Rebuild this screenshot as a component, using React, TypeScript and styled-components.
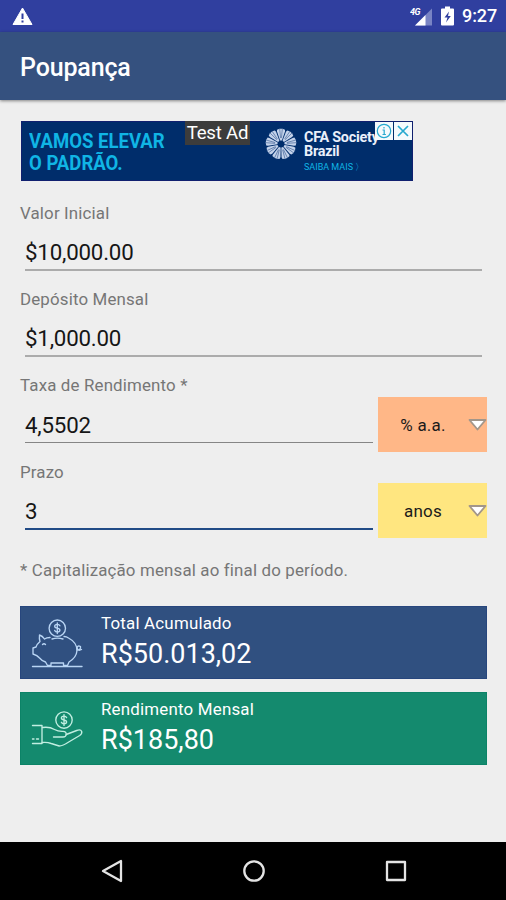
import React from "react";
import styled, { createGlobalStyle } from "styled-components";

const GlobalStyle = createGlobalStyle`
  *, *::before, *::after { box-sizing: border-box; }
  body { margin: 0; background: #eeeeee; font-family: Roboto, "Liberation Sans", sans-serif; }
`;

const Screen = styled.div`
  width: 506px;
  height: 900px;
  display: flex;
  flex-direction: column;
  background: #eeeeee;
  overflow: hidden;
`;

const StatusBar = styled.header`
  height: 32px;
  flex: none;
  display: flex;
  align-items: center;
  padding: 0 9px 0 12px;
  background: #303f9f;
  color: #fff;
`;

const StatusIcons = styled.div`
  margin-left: auto;
  display: flex;
  align-items: center;
  gap: 8px;
`;

const Clock = styled.span`
  width: 35px;
  font-size: 18px;
  font-weight: 500;
  line-height: 32px;
  letter-spacing: -0.1px;
  text-align: right;
`;

const AppBar = styled.div`
  height: 68px;
  flex: none;
  display: flex;
  align-items: center;
  padding: 2px 20px 0;
  background: #35517f;
  box-shadow: 0 1px 3px rgba(0, 0, 0, 0.45);
`;

const Title = styled.h1`
  margin: 0;
  color: #fff;
  font-size: 25px;
  font-weight: 500;
  line-height: 33px;
  letter-spacing: -0.15px;
`;

const Content = styled.main`
  flex: 1;
  display: flex;
  flex-direction: column;
  padding: 21px 19px 0 20px;
`;

const AdBanner = styled.div`
  position: relative;
  flex: none;
  width: 392px;
  height: 60px;
  margin: 0 0 22px 1px;
  display: flex;
  background: #002d6b;
  border: 1px solid #10206f;
  color: #10b5e5;
`;

const AdSlogan = styled.div`
  width: 243px;
  padding: 8px 0 0 7px;
  font-size: 20.5px;
  font-weight: 700;
  line-height: 22px;
  white-space: nowrap;
`;

const SloganLine = styled.span`
  display: block;
  transform: scaleX(0.905);
  transform-origin: left;
`;

const AdBrand = styled.div`
  padding: 9px 0 0 7px;
  white-space: nowrap;
`;

const BrandName = styled.div`
  color: #eaf0fa;
  font-size: 14.4px;
  font-weight: 700;
  line-height: 14px;
  letter-spacing: -0.25px;
`;

const BrandLink = styled.div`
  margin-top: 3px;
  font-size: 9px;
  line-height: 11px;
`;

const BrandMark = styled.svg`
  display: block;
  flex: none;
  margin-top: 6px;
`;

const TestTag = styled.span`
  position: absolute;
  left: 163px;
  top: -1px;
  width: 65px;
  height: 24px;
  background: #3c3c3c;
  color: #fff;
  font-size: 18.6px;
  line-height: 25px;
  letter-spacing: -0.2px;
  text-align: center;
  white-space: nowrap;
`;

const AdControls = styled.div`
  position: absolute;
  top: 0;
  right: 0;
  display: flex;
  gap: 1px;
`;

const AdControl = styled.span`
  width: 18px;
  height: 18px;
  background: #f4fafc;
  display: flex;
  align-items: center;
  justify-content: center;
`;

const Field = styled.div`
  height: 86px;
  flex: none;
`;

const Label = styled.div<{ $low?: boolean }>`
  height: 22px;
  color: #767676;
  font-size: 16.9px;
  line-height: ${(p) => (p.$low ? 22 : 21)}px;
  letter-spacing: 0.15px;
`;

const FieldRow = styled.div`
  height: 55px;
  display: flex;
  gap: 5px;
`;

const underlines = {
  wide: "2px solid #ababab",
  thin: "1px solid #858585",
  active: "2px solid #214b86",
};

const Value = styled.div<{ $line: keyof typeof underlines }>`
  flex: 1;
  height: ${(p) => (p.$line === "active" ? 47 : 46)}px;
  margin-left: 5px;
  margin-right: ${(p) => (p.$line === "wide" ? 5 : 0)}px;
  padding-top: ${(p) => (p.$line === "wide" ? 12 : 13)}px;
  color: #161616;
  font-size: 22.3px;
  line-height: 30px;
  letter-spacing: -0.2px;
  border-bottom: ${(p) => underlines[p.$line]};
`;

const Select = styled.div<{ $color: string }>`
  width: 109px;
  display: flex;
  align-items: center;
  background: ${(p) => p.$color};
  color: #1b1b1b;
  font-size: 17px;
`;

const SelectText = styled.span`
  flex: 1;
  text-align: center;
  letter-spacing: 0.2px;
`;

const Note = styled.p`
  height: 22px;
  flex: none;
  margin: 12px 0 25px;
  color: #767676;
  font-size: 16.9px;
  line-height: 22px;
  letter-spacing: 0.15px;
`;

const Card = styled.section<{ $color: string; $edge: string }>`
  height: 73px;
  flex: none;
  margin-bottom: 13px;
  display: flex;
  align-items: center;
  gap: 17px;
  padding-left: 9px;
  background: ${(p) => p.$color};
  border: 1px solid ${(p) => p.$edge};
  color: #fff;
`;

const CardText = styled.div`
  display: flex;
  flex-direction: column;
  height: 100%;
  padding-top: 5px;
`;

const CardLabel = styled.span`
  font-size: 16.9px;
  line-height: 22px;
  letter-spacing: 0.2px;
`;

const CardValue = styled.span`
  font-size: 27px;
  line-height: 40px;
`;

const NavBar = styled.nav`
  height: 58px;
  flex: none;
  display: flex;
  justify-content: center;
  align-items: center;
  gap: 118px;
  padding-left: 1px;
  background: #000;
`;

const CardIcon = styled.svg`
  display: block;
  flex: none;
`;

const Arrow = () => (
  <svg width="19" height="15" viewBox="0 0 19 15">
    <path d="M1.500 3h16L9.500 12.500z" fill="#fff" stroke="#a2968a" strokeWidth="1.800" strokeLinejoin="round" />
  </svg>
);

const petals = Array.from({ length: 9 }, (_, i) => i * 40);

const PetalMark = () => (
  <BrandMark width="32" height="32" viewBox="-16 -16 32 32">
    {petals.map((a) => (
      <g key={a} transform={`rotate(${a})`}>
        <path d="M-.9 -3.500L-4 -12.500V-14.300L-1.500 -15.300H1.500L4 -14.300V-12.500L.9 -3.500z" fill="#c3d2ea" />
        <path d="M-.4 -6L-1.400 -15.800M.4 -6L1.400 -15.800" stroke="#2d5189" strokeWidth=".55" />
      </g>
    ))}
  </BrandMark>
);

const Coin = ({ x, y }: { x: number; y: number }) => (
  <g>
    <circle cx={x} cy={y} r="8.2" />
    <path
      d={`M${x + 2.6} ${y - 2.4}q-.7-1.5-2.6-1.5q-2.6 0-2.6 1.9q0 1.5 2.6 2q2.6.5 2.6 2.1q0 1.8-2.6 1.8q-2 0-2.6-1.6M${x} ${y - 5.4}v10.8`}
    />
  </g>
);

const PiggyIcon = () => (
  <CardIcon width="54" height="54" viewBox="30 615 54 54" fill="none" stroke="#b9d5f4" strokeWidth="1.35" strokeLinejoin="round" strokeLinecap="round">
    <Coin x={57.3} y={627.2} />
    <path d="M50 636.500q-3.500 0-5.500 1.500q-2-3-5-4q-.5 4 .5 6.500q-3.500 3-4 5.500l-3 1v6q4.500 1.500 6 3.500q3 3.500 6.500 4.500l2 3.500h3.500v-2.500h12.500v2.500h4l1.500-3.500q7.500-4.500 8-11.500q0-8-8.500-12.500q-2-1.500-4.500-1.500" />
    <path d="M77 649q4 0 3.500-3.500q-3-1.500-3.500 1.500q1 3.500 4.500 1.500" />
    <path d="M42.500 643.500q1.500-1.500 3 0M52 638q5.500-1.800 11 0" />
    <path d="M32.500 665.500h49.500" />
  </CardIcon>
);

const HandIcon = () => (
  <CardIcon width="54" height="54" viewBox="30 702 54 54" fill="none" stroke="#c2eee1" strokeWidth="1.35" strokeLinejoin="round" strokeLinecap="round">
    <Coin x={64} y={720} />
    <path d="M32.500 725.500h9.500v18h-9.500M32.500 739h1.500M36.500 739h2" />
    <path d="M42.500 727.500q7-1 12 2q3.500 2 8.500 1.800q3.500.2 3.200 3.200q-.2 2.500-3.200 2.500h-9.500" />
    <path d="M66.200 734.500l10.500-4q4-1.500 5 1q.6 2.200-2 4l-11 6.500q-6 4-9.500 4l-8-2.500q-4-1.500-9-1" />
  </CardIcon>
);

export default function App() {
  return (
    <>
      <GlobalStyle />
      <Screen>
        <StatusBar>
          <svg width="21" height="20" viewBox="0 0 21 20">
            <path d="M10.500 2L20 18.500H1z" fill="#fff" stroke="#fff" strokeWidth="1" strokeLinejoin="round" />
            <path d="M10.500 7.500v5.500M10.500 14.500v2" stroke="#303f9f" strokeWidth="2" />
          </svg>
          <StatusIcons>
            <svg width="23" height="20" viewBox="0 0 23 20">
              <path d="M22 2.500v17H5z" fill="#7984c4" />
              <path d="M15.500 9V19.500H5z" fill="#fff" />
              <text x="0" y="9" fill="#fff" fontFamily="Roboto, sans-serif" fontStyle="italic" fontSize="9" fontWeight="700" letterSpacing="-.5">4G</text>
            </svg>
            <svg width="13" height="20" viewBox="0 0 13 20">
              <path d="M4 .5h5v2h3q1 0 1 1V18.500q0 1-1 1H1q-1 0-1-1V3.500q0-1 1-1h3z" fill="#fff" />
              <path d="M8 5.500l-4.500 6h3L5 16.500l4.800-6.500H7z" fill="#303f9f" />
            </svg>
            <Clock>9:27</Clock>
          </StatusIcons>
        </StatusBar>
        <AppBar>
          <Title>Poupança</Title>
        </AppBar>
        <Content>
          <AdBanner>
            <AdSlogan>
              <SloganLine>VAMOS ELEVAR</SloganLine>
              <SloganLine>O PADRÃO.</SloganLine>
            </AdSlogan>
            <PetalMark />
            <AdBrand>
              <BrandName>CFA Society</BrandName>
              <BrandName>Brazil</BrandName>
              <BrandLink>SAIBA MAIS 〉</BrandLink>
            </AdBrand>
            <TestTag>Test Ad</TestTag>
            <AdControls>
              <AdControl>
                <svg width="16" height="16" viewBox="0 0 16 16" fill="none" stroke="#26a9cf" strokeWidth="1.2">
                  <circle cx="8" cy="8" r="6.700" />
                  <path d="M6.500 7H8.200v4.500M6.500 11.500h3.400M8 4v1.500" />
                </svg>
              </AdControl>
              <AdControl>
                <svg width="16" height="16" viewBox="0 0 16 16" fill="none" stroke="#26a9cf" strokeWidth="1.7">
                  <path d="M3 3l10 10M13 3L3 13" />
                </svg>
              </AdControl>
            </AdControls>
          </AdBanner>
          <Field>
            <Label>Valor Inicial</Label>
            <FieldRow>
              <Value $line="wide">$10,000.00</Value>
            </FieldRow>
          </Field>
          <Field>
            <Label>Depósito Mensal</Label>
            <FieldRow>
              <Value $line="wide">$1,000.00</Value>
            </FieldRow>
          </Field>
          <Field>
            <Label>Taxa de Rendimento *</Label>
            <FieldRow>
              <Value $line="thin">4,5502</Value>
              <Select $color="#ffb787">
                <SelectText>% a.a.</SelectText>
                <Arrow />
              </Select>
            </FieldRow>
          </Field>
          <Field>
            <Label $low>Prazo</Label>
            <FieldRow>
              <Value $line="active">3</Value>
              <Select $color="#ffe680">
                <SelectText>anos</SelectText>
                <Arrow />
              </Select>
            </FieldRow>
          </Field>
          <Note>* Capitalização mensal ao final do período.</Note>
          <Card $color="#305080" $edge="#27467d">
            <PiggyIcon />
            <CardText>
              <CardLabel>Total Acumulado</CardLabel>
              <CardValue>R$50.013,02</CardValue>
            </CardText>
          </Card>
          <Card $color="#148a6e" $edge="#0c8367">
            <HandIcon />
            <CardText>
              <CardLabel>Rendimento Mensal</CardLabel>
              <CardValue>R$185,80</CardValue>
            </CardText>
          </Card>
        </Content>
        <NavBar>
          <svg width="24" height="26" viewBox="0 0 24 26" fill="none" stroke="#e4e4e4" strokeWidth="2.300" strokeLinejoin="round">
            <path d="M21 3v20L3 13z" />
          </svg>
          <svg width="24" height="26" viewBox="0 0 24 26" fill="none" stroke="#e4e4e4" strokeWidth="2.300">
            <circle cx="12" cy="13" r="9.700" />
          </svg>
          <svg width="24" height="26" viewBox="0 0 24 26" fill="none" stroke="#e4e4e4" strokeWidth="2.300" strokeLinejoin="round">
            <path d="M3 4h18v18H3z" />
          </svg>
        </NavBar>
      </Screen>
    </>
  );
}
